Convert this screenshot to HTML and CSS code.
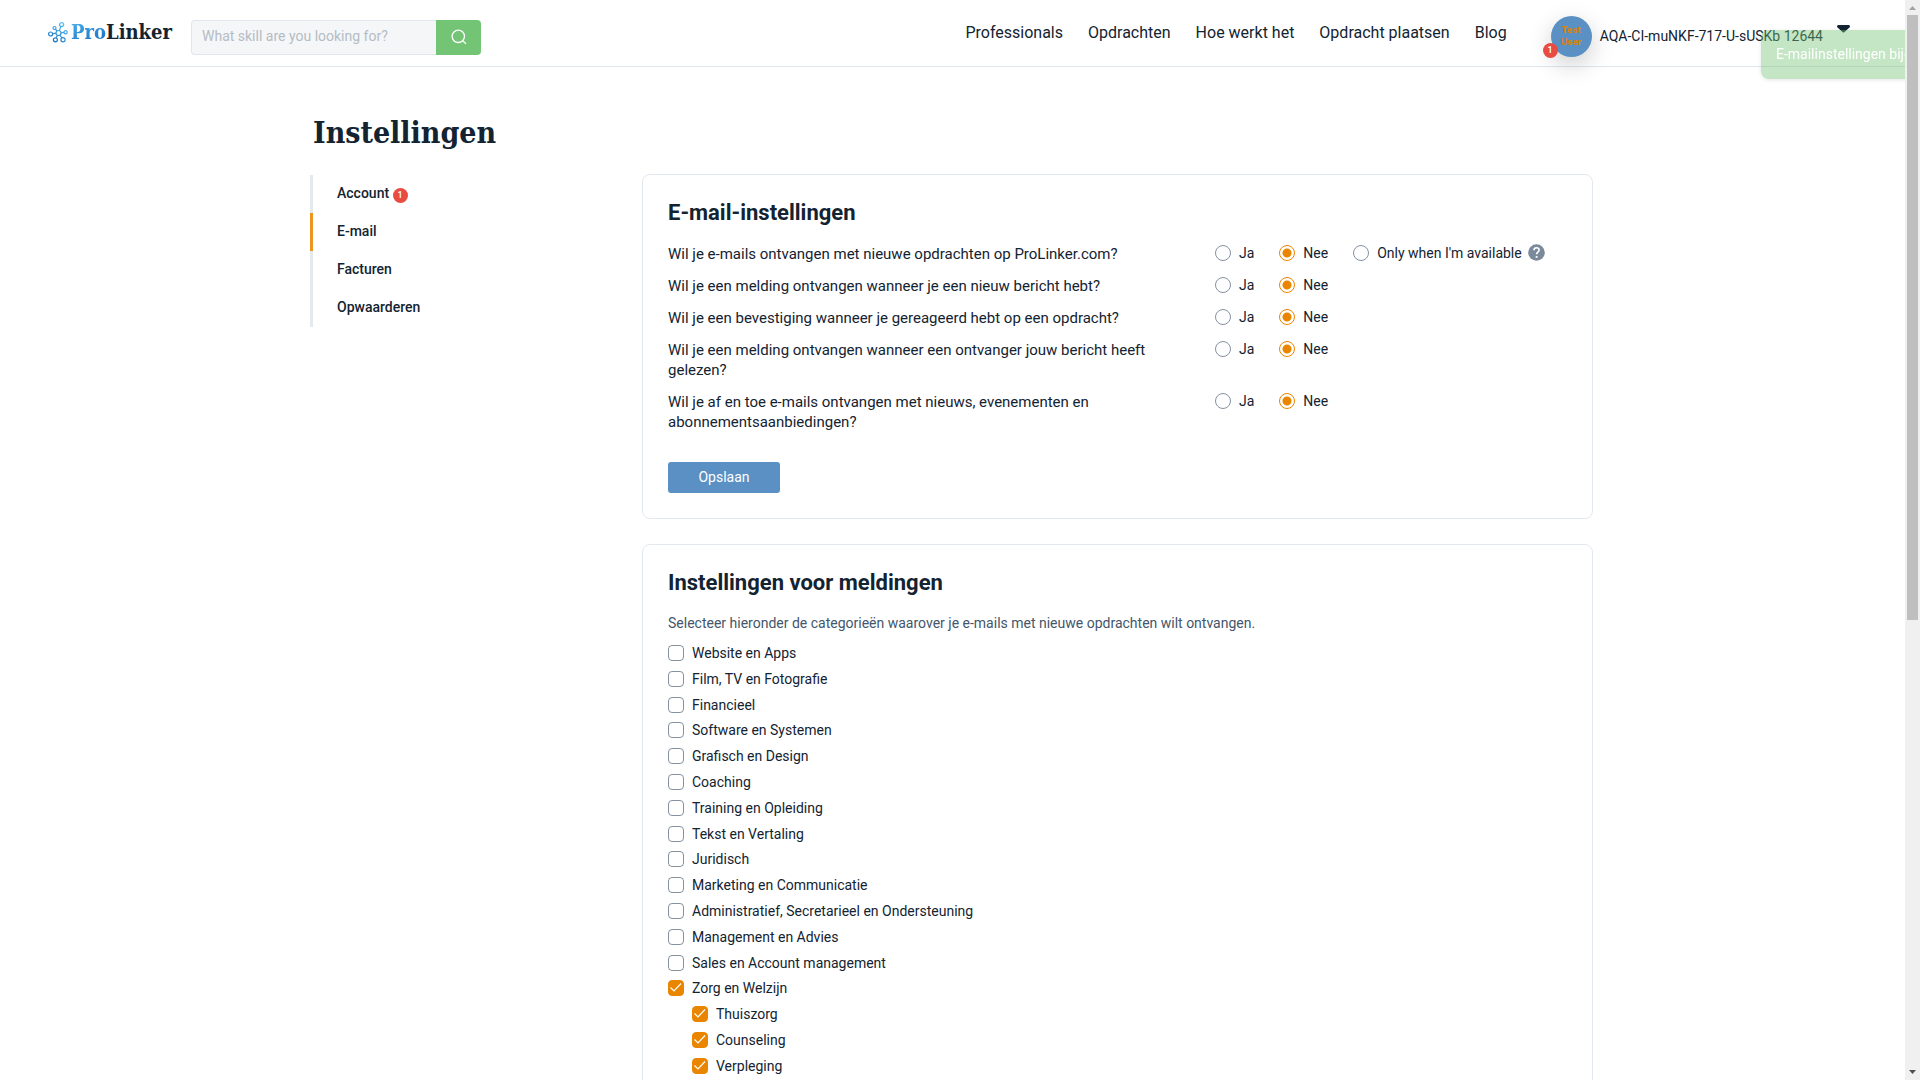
FILE: index.html
```html
<!DOCTYPE html>
<html lang="nl">
<head>
<meta charset="utf-8">
<meta name="viewport" content="width=device-width, initial-scale=1">
<title>Instellingen - ProLinker</title>
<link rel="stylesheet" href="styles.css">
</head>
<body>
<div class="page">
  <header class="header">
    <a class="logo" href="#" aria-label="ProLinker">
      <svg class="logo-mark" viewBox="0 0 20 21" fill="none" stroke-width="1.2">
        <defs><linearGradient id="mark" x1="0" y1="20" x2="14" y2="0" gradientUnits="userSpaceOnUse"><stop stop-color="#0b63b8"/><stop offset="1" stop-color="#5bc0f3"/></linearGradient></defs>
        <g stroke="url(#mark)">
          <circle cx="10.5" cy="11" r="2.5"/><circle cx="13.6" cy="2.6" r="2"/><circle cx="6.5" cy="6" r="1.5"/><circle cx="2.6" cy="12" r="2"/><circle cx="17.6" cy="10.2" r="1.6"/><circle cx="7.4" cy="17.8" r="2"/><circle cx="15" cy="17.8" r="2.1"/>
          <path d="M11.3 8.6l1.6-4.1M9 9L7.4 7.2M8 11.2l-3.4.6M13 10.8l3-.4M9.6 13.3l-1.5 2.6M12 13l1.8 3"/>
        </g>
      </svg>
      <span class="logo-text"><span class="logo-pro">Pro</span>Linker</span>
    </a>
    <form class="search">
      <input class="search-input" type="text" placeholder="What skill are you looking for?" aria-label="What skill are you looking for?">
      <button class="search-button" type="button" aria-label="Zoeken">
        <svg width="16" height="16" viewBox="0 0 16 16" fill="none" stroke="#fff" stroke-width="1.3"><circle cx="7.3" cy="7.3" r="6.2"/><path d="M11.6 11.6l3.3 3.2"/></svg>
      </button>
    </form>
    <nav class="nav">
      <a href="#">Professionals</a>
      <a href="#">Opdrachten</a>
      <a href="#">Hoe werkt het</a>
      <a href="#">Opdracht plaatsen</a>
      <a href="#">Blog</a>
    </nav>
    <button class="user" type="button">
      <span class="avatar"><span>Test</span><span>User</span><span class="badge avatar-badge">1</span></span>
      <span class="user-name">AQA-CI-muNKF-717-U-sUSKb 12644</span>
      <svg class="caret" width="13" height="8" viewBox="0 0 13 8"><path d="M1 0h11q1 .3 1 2L7.500 7q-1 1-2 0L0 2q0-1.700 1-2z" fill="#132331"/></svg>
    </button>
  </header>
  <div class="toast" role="status">E-mailinstellingen bijgewerkt</div>

  <main class="main">
    <h1 class="title">Instellingen</h1>
    <div class="columns">
      <nav class="side">
        <a class="side-link" href="#">Account <span class="badge">1</span></a>
        <a class="side-link active" href="#">E-mail</a>
        <a class="side-link" href="#">Facturen</a>
        <a class="side-link" href="#">Opwaarderen</a>
      </nav>
      <div class="cards">
        <form class="card">
          <h2>E-mail-instellingen</h2>
          <div class="questions">
            <div class="question" role="radiogroup" aria-labelledby="q1">
              <span class="ask" id="q1">Wil je e-mails ontvangen met nieuwe opdrachten op ProLinker.com?</span>
              <div class="answers">
                <label class="option"><input type="radio" name="q1">Ja</label>
                <label class="option"><input type="radio" name="q1" checked>Nee</label>
                <label class="option"><input type="radio" name="q1">Only when I'm available</label>
                <svg class="help" width="17" height="17" viewBox="0 0 17 17"><circle cx="8.500" cy="8.500" r="8.300" fill="#7b8a9a"/><path d="M5.900 6.300c.1-3.500 5.500-3.300 5.200-.1-.2 1.900-2.500 1.900-2.500 4" fill="none" stroke="#fff" stroke-width="1.600"/><path d="M7.700 12h1.800v1.800H7.700z" fill="#fff"/></svg>
              </div>
            </div>
            <div class="question" role="radiogroup" aria-labelledby="q2">
              <span class="ask" id="q2">Wil je een melding ontvangen wanneer je een nieuw bericht hebt?</span>
              <div class="answers">
                <label class="option"><input type="radio" name="q2">Ja</label>
                <label class="option"><input type="radio" name="q2" checked>Nee</label>
              </div>
            </div>
            <div class="question" role="radiogroup" aria-labelledby="q3">
              <span class="ask" id="q3">Wil je een bevestiging wanneer je gereageerd hebt op een opdracht?</span>
              <div class="answers">
                <label class="option"><input type="radio" name="q3">Ja</label>
                <label class="option"><input type="radio" name="q3" checked>Nee</label>
              </div>
            </div>
            <div class="question" role="radiogroup" aria-labelledby="q4">
              <span class="ask" id="q4">Wil je een melding ontvangen wanneer een ontvanger jouw bericht heeft gelezen?</span>
              <div class="answers">
                <label class="option"><input type="radio" name="q4">Ja</label>
                <label class="option"><input type="radio" name="q4" checked>Nee</label>
              </div>
            </div>
            <div class="question" role="radiogroup" aria-labelledby="q5">
              <span class="ask" id="q5">Wil je af en toe e-mails ontvangen met nieuws, evenementen en abonnementsaanbiedingen?</span>
              <div class="answers">
                <label class="option"><input type="radio" name="q5">Ja</label>
                <label class="option"><input type="radio" name="q5" checked>Nee</label>
              </div>
            </div>
          </div>
          <button class="save" type="button">Opslaan</button>
        </form>

        <form class="card">
          <h2>Instellingen voor meldingen</h2>
          <p class="intro">Selecteer hieronder de categorieën waarover je e-mails met nieuwe opdrachten wilt ontvangen.</p>
          <div class="categories">
            <label class="check"><input type="checkbox">Website en Apps</label>
            <label class="check"><input type="checkbox">Film, TV en Fotografie</label>
            <label class="check"><input type="checkbox">Financieel</label>
            <label class="check"><input type="checkbox">Software en Systemen</label>
            <label class="check"><input type="checkbox">Grafisch en Design</label>
            <label class="check"><input type="checkbox">Coaching</label>
            <label class="check"><input type="checkbox">Training en Opleiding</label>
            <label class="check"><input type="checkbox">Tekst en Vertaling</label>
            <label class="check"><input type="checkbox">Juridisch</label>
            <label class="check"><input type="checkbox">Marketing en Communicatie</label>
            <label class="check"><input type="checkbox">Administratief, Secretarieel en Ondersteuning</label>
            <label class="check"><input type="checkbox">Management en Advies</label>
            <label class="check"><input type="checkbox">Sales en Account management</label>
            <label class="check"><input type="checkbox" checked>Zorg en Welzijn</label>
            <label class="check sub"><input type="checkbox" checked>Thuiszorg</label>
            <label class="check sub"><input type="checkbox" checked>Counseling</label>
            <label class="check sub"><input type="checkbox" checked>Verpleging</label>
          </div>
        </form>
      </div>
    </div>
  </main>
</div>
<div class="scrollbar" aria-hidden="true">
  <svg width="7" height="4" viewBox="0 0 7 4"><path d="M0 4l3.500-4L7 4z" fill="#a3a3a3"/></svg>
  <div class="track"><div class="thumb"></div></div>
  <svg width="7" height="4" viewBox="0 0 7 4"><path d="M0 0h7L3.500 4z" fill="#505050"/></svg>
</div>
</body>
</html>
```
FILE: styles.css
```css
* { box-sizing: border-box; }

body {
  margin: 0;
  display: flex;
  height: 100vh;
  overflow: hidden;
  background: #fff;
  color: #132331;
  font: 14px/1.2 Roboto, "Liberation Sans", sans-serif;
}

a { color: inherit; text-decoration: none; }
button, input { font: inherit; color: inherit; margin: 0; }
button { border: 0; padding: 0; background: none; cursor: pointer; }

.page { position: relative; flex: 1; min-width: 0; overflow: hidden; }

/* Header */
.header {
  display: flex;
  align-items: center;
  height: 67px;
  padding: 0 55px 0 48px;
  border-bottom: 1px solid #dfe6ee;
}
.logo {
  display: flex;
  align-items: center;
  gap: 3px;
  width: 143px;
  padding-bottom: 2px;
}
.logo-mark { width: 20px; height: 21px; flex: none; }
.logo-text {
  font: bold 20px/26px "Roboto Slab", "DejaVu Serif Condensed", "DejaVu Serif", serif;
}
.logo-pro {
  background: linear-gradient(160deg, #4fb5ee, #0c68c0);
  background-clip: text;
  color: transparent;
}
.search { display: flex; width: 290px; height: 35px; margin-top: 8px; }
.search-input {
  flex: 1;
  min-width: 0;
  padding: 0 10px 2px;
  border: 1px solid #dfe6ee;
  border-right: 0;
  border-radius: 4px 0 0 4px;
  background: #f5f6f8;
}
.search-input::placeholder { color: #b4bcc5; opacity: 1; }
.search-button {
  display: flex;
  align-items: center;
  justify-content: center;
  width: 45px;
  border-radius: 0 4px 4px 0;
  background: #74c476;
}
.nav { display: flex; gap: 25px; margin-left: auto; font-size: 16px; line-height: 20px; }
.user { display: flex; align-items: center; margin-left: 44px; padding-top: 6px; }
.avatar {
  position: relative;
  display: flex;
  flex-direction: column;
  align-items: center;
  justify-content: center;
  width: 41px;
  height: 41px;
  margin-right: 8px;
  border-radius: 50%;
  background: #5a90c3;
  box-shadow: 0 8px 24px rgba(0, 0, 0, .2);
  color: #d9820b;
  font: 800 9px/12px Inter, sans-serif;
}
.badge {
  display: inline-block;
  width: 15px;
  height: 15px;
  border-radius: 50%;
  background: #e94b42;
  color: #fff;
  font: 500 9px/14px Roboto, sans-serif;
  text-align: center;
}
.avatar-badge { position: absolute; left: -8px; bottom: -1px; }
.caret { margin: 0 0 14px 14px; }
.toast {
  position: absolute;
  top: 30px;
  left: calc(100% - 144px);
  padding: 16px 15px;
  border-radius: 8px;
  background: #74c476;
  box-shadow: 0 1px 4px rgba(0, 0, 0, .25);
  color: #fff;
  line-height: 17px;
  white-space: nowrap;
  opacity: .42;
}

/* Settings */
.main { width: 1285px; max-width: 100%; margin: 0 auto; padding-top: 45px; }
.title {
  margin: 0 0 20px 3px;
  font: bold 30px/42px "Roboto Slab", "DejaVu Serif Condensed", "DejaVu Serif", serif;
}
.columns {
  display: flex;
  justify-content: space-between;
  align-items: flex-start;
  padding-right: 2px;
}
.side {
  display: flex;
  flex-direction: column;
  width: 260px;
  margin-top: 1px;
  font-weight: 500;
}
.side-link {
  padding: 0 0 2px 24px;
  border-left: 3px solid #e4e9ee;
  line-height: 36px;
}
.side-link.active { border-color: #ec961f; }
.cards { display: flex; flex-direction: column; gap: 25px; width: 951px; }
.card { padding: 25px; border: 1px solid #e3e8ee; border-radius: 8px; }
.card h2 { margin: 0 0 18px; font-size: 22px; line-height: 26px; font-weight: 700; }
.questions { display: grid; gap: 12px; margin-bottom: 30px; font-size: 15px; line-height: 20px; }
.question { display: flex; }
.ask { width: 547px; padding-right: 60px; }
.answers { display: flex; gap: 25px; height: 17px; font-size: 14px; line-height: 18px; }
.option { display: flex; align-items: center; gap: 8px; }
.help { margin-left: -19px; }
input[type="radio"],
input[type="checkbox"] {
  appearance: none;
  flex: none;
  width: 16px;
  height: 16px;
  border: 1px solid #8592a2;
  background: #fff;
}
input[type="radio"] { border-radius: 50%; }
input[type="radio"]:checked {
  border-color: #ea8500;
  background: radial-gradient(circle, #ea8500 4px, #fff 5px);
}
.save {
  width: 112px;
  height: 31px;
  border-radius: 3px;
  background: #5a90c3;
  color: #fff;
}
.intro { margin: 0 0 13px; color: #43566b; line-height: 18px; }
.categories { display: grid; gap: 9px; }
.check { display: flex; gap: 8px; }
.check.sub { margin-left: 24px; }
input[type="checkbox"] { border-radius: 4px; }
input[type="checkbox"]:checked {
  border-color: #ea8500;
  background: #ea8500 url("data:image/svg+xml,%3Csvg xmlns='http://www.w3.org/2000/svg' width='14' height='14' fill='none' stroke='white' stroke-width='1.2'%3E%3Cpath d='M1.500 6.500L5 10l7-7.500'/%3E%3C/svg%3E") center no-repeat;
}

/* Scrollbar */
.scrollbar {
  display: flex;
  flex-direction: column;
  align-items: center;
  gap: 5px;
  width: 15px;
  padding: 6px 0;
  background: #f0f0f0;
}
.scrollbar svg { flex: none; }
.track { flex: 1; width: 11px; }
.thumb { height: 57.6%; background: #bfbfbf; }
```
